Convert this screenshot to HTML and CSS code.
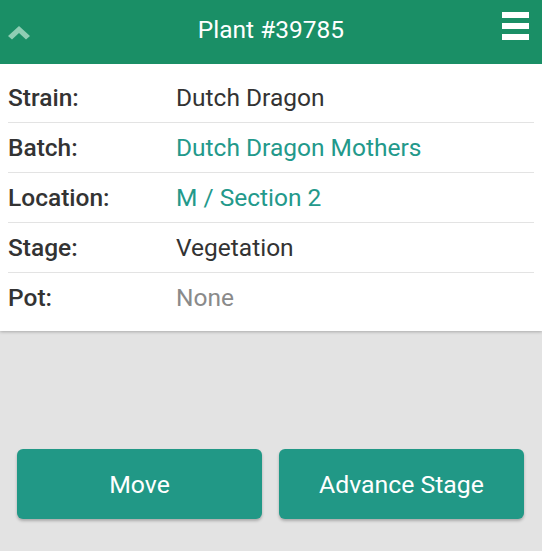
FILE: index.html
```html
<!DOCTYPE html>
<html>
<head>
<meta charset="utf-8">
<link rel="stylesheet" href="styles.css">
</head>
<body>
<header class="topbar">
  <span class="up">
    <svg width="24" height="16" viewBox="0 0 24 16"><path d="M1 12 L12 2 L23 12 L19 15.5 L12 9 L5 15.5 Z" fill="#8fceb4"/></svg>
  </span>
  <h1 class="title">Plant #39785</h1>
  <span class="menu"><i></i><i></i><i></i></span>
</header>
<section class="card">
  <div class="row"><span class="label">Strain:</span><span class="value">Dutch Dragon</span></div>
  <div class="row"><span class="label">Batch:</span><a class="value link">Dutch Dragon Mothers</a></div>
  <div class="row"><span class="label">Location:</span><a class="value link">M / Section 2</a></div>
  <div class="row"><span class="label">Stage:</span><span class="value">Vegetation</span></div>
  <div class="row last"><span class="label">Pot:</span><span class="value muted">None</span></div>
</section>
<div class="actions">
  <button class="btn">Move</button>
  <button class="btn">Advance Stage</button>
</div>
</body>
</html>
```
FILE: styles.css
```css
html, body {
  margin: 0;
  padding: 0;
  height: 100%;
}
body {
  background: #e3e3e3;
  font-family: Roboto, "Noto Sans", sans-serif;
  display: flex;
  flex-direction: column;
  overflow: hidden;
}
.topbar {
  height: 64px;
  background: #1a8f66;
  display: flex;
  align-items: center;
  justify-content: space-between;
  padding: 0 13px 0 7px;
  position: relative;
  flex: none;
}
.up {
  display: flex;
  width: 24px;
  height: 16px;
}
.title {
  margin: 0;
  color: #fff;
  font-weight: 400;
  font-size: 24.5px;
  position: absolute;
  left: 0;
  right: 0;
  text-align: center;
  top: 16px;
  line-height: 28px;
  pointer-events: none;
}
.menu {
  display: flex;
  flex-direction: column;
  gap: 5px;
  width: 27px;
  margin-top: -12px;
}
.menu i {
  display: block;
  height: 6px;
  background: #fff;
}
.card {
  background: #fff;
  padding: 9px 8px;
  box-shadow: 0 1px 3px rgba(0,0,0,0.25);
  flex: none;
}
.row {
  display: flex;
  align-items: center;
  height: 49px;
  border-bottom: 1px solid #e3e3e3;
  font-size: 24.5px;
  color: #333;
}
.row.last {
  border-bottom: none;
}
.label {
  width: 168px;
  flex: none;
  font-weight: 500;
}
.link {
  color: #23998b;
  text-decoration: none;
}
.muted {
  color: #8a8a8a;
}
.actions {
  margin-top: auto;
  display: flex;
  gap: 17px;
  padding: 0 18px 32px 17px;
}
.btn {
  flex: 1;
  height: 70px;
  border: none;
  border-radius: 6px;
  background: #219886;
  color: #fff;
  font-family: Roboto, "Noto Sans", sans-serif;
  font-size: 24.8px;
  box-shadow: 0 2px 3px rgba(0,0,0,0.25);
}
```
